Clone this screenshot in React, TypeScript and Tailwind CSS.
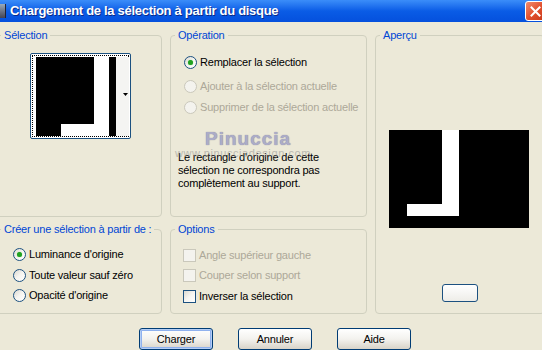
import React from "react";

const font = { fontFamily: '"Liberation Sans", Arial, sans-serif' };

function Radio({ checked, disabled }: { checked?: boolean; disabled?: boolean }) {
    return (
        <span
            className={`w-[13px] h-[13px] shrink-0 rounded-full border flex items-center justify-center ${disabled
                ? "border-[#CAC8BB] bg-[#F4F3EE]"
                : "border-[#1C5180] bg-linear-to-br from-[#DCD9D0] via-[#F6F5F1] to-white"
                }`}
        >
            {checked && <span className="w-[5px] h-[5px] rounded-full bg-[#21A121] shadow-[0_0_1px_#5FD05F]" />}
        </span>
    );
}

function Check({ disabled }: { disabled?: boolean }) {
    return (
        <span
            className={`w-[13px] h-[13px] shrink-0 border ${disabled
                ? "border-[#CAC8BB] bg-[#F4F3EE]"
                : "border-[#1C5180] bg-linear-to-br from-[#DCD9D0] via-[#F6F5F1] to-white"
                }`}
        />
    );
}

function Option({
    kind,
    label,
    checked,
    disabled,
    className,
}: {
    kind: "radio" | "check";
    label: string;
    checked?: boolean;
    disabled?: boolean;
    className: string;
}) {
    return (
        <div className={`flex items-center h-[13px] ${className}`}>
            {kind === "radio" ? <Radio checked={checked} disabled={disabled} /> : <Check disabled={disabled} />}
            <span className={`ml-[3px] whitespace-nowrap ${disabled ? "text-[#ACA899]" : "text-black"}`}>{label}</span>
        </div>
    );
}

function Group({ title, className, children }: { title: string; className: string; children?: React.ReactNode }) {
    return (
        <fieldset className={`relative border border-[#D0D0BF] rounded-[4px] shrink-0 ${className}`}>
            <legend className="ml-[4px] px-[3px] leading-[13px] whitespace-nowrap text-[#0046D5]">{title}</legend>
            {children}
        </fieldset>
    );
}

function XpButton({ label, isDefault }: { label: string; isDefault?: boolean }) {
    return (
        <button
            className={`w-[74px] h-[22px] rounded-[3px] border border-[#003C74] bg-linear-to-b from-white via-[#F3F2EE] to-[#D8D3C8] text-black leading-none ${isDefault ? "shadow-[inset_0_0_0_1px_#B5CEF5,inset_0_0_0_2px_#8FB1EE]" : ""
                }`}
        >
            {label}
        </button>
    );
}

export default function App() {
    return (
        <div className="w-[542px] h-[350px] overflow-hidden bg-[#ECE9D8] text-[11px] tracking-[-0.2px] flex flex-col" style={font}>
            {/* Title bar */}
            <div className="h-[22px] shrink-0 flex items-center bg-linear-to-b from-[#3B8DF9] via-[#0A5CE6] to-[#0550DD]">
                <span className="w-[6px] h-[14px] bg-linear-to-b from-[#9AB] to-[#445] border-r border-[#223]" />
                <span className="ml-[4px] text-white font-bold text-[13px] tracking-[-0.3px] [text-shadow:1px_1px_0_#0A2A88]">
                    Chargement de la sélection à partir du disque
                </span>
                <span className="ml-auto mr-[-4px] w-[21px] h-[20px] rounded-[3px] border border-white bg-linear-to-br from-[#F08A6E] via-[#E2502E] to-[#C8381A] flex items-center justify-center">
                    <svg width="11" height="11" viewBox="0 0 11 11">
                        <path d="M1.5 1.5 L9.5 9.5 M9.5 1.5 L1.5 9.5" stroke="white" strokeWidth="2" strokeLinecap="square" />
                    </svg>
                </span>
            </div>

            {/* Top row */}
            <div className="flex gap-[8px] ml-[-4px] mt-[7px]">
                <Group title="Sélection" className="w-[166px] h-[188px]">
                    <div className="ml-[33px] mt-[11px] w-[101px] h-[86px] rounded-[2px] border border-[#1C5180] bg-white p-[1px]">
                        <div className="w-full h-full border border-dotted border-black">
                            <svg width="97" height="82" viewBox="0 0 97 82">
                                <rect x="3" y="1" width="73" height="79" fill="black" />
                                <rect x="61" y="1" width="15" height="79" fill="white" />
                                <rect x="28" y="68" width="48" height="12" fill="white" />
                                <rect x="76" y="1" width="7" height="79" fill="black" />
                                <rect x="83" y="1" width="13" height="79" fill="#F4F4F2" />
                                <path d="M90 37 L95 37 L92.5 40 Z" fill="black" />
                            </svg>
                        </div>
                    </div>
                </Group>

                <Group title="Opération" className="w-[197px] h-[188px]">
                    <Option kind="radio" label="Remplacer la sélection" checked className="ml-[13px] mt-[14px]" />
                    <Option kind="radio" label="Ajouter à la sélection actuelle" disabled className="ml-[13px] mt-[11px]" />
                    <Option kind="radio" label="Supprimer de la sélection actuelle" disabled className="ml-[13px] mt-[8px]" />
                    <p className="ml-[7px] mt-[37px] leading-[13px] text-black">
                        Le rectangle d'origine de cette
                        <br />
                        sélection ne correspondra pas
                        <br />
                        complètement au support.
                    </p>
                    {/* watermark */}
                    <div className="absolute left-[34px] top-[87px] text-[19px] leading-none font-semibold tracking-[1px] text-[#A6A6C6] opacity-90 [text-shadow:0_0_1px_#6E6E90]">
                        Pinuccia
                    </div>
                    <div className="absolute left-[4px] top-[105px] leading-[13px] text-[11px] tracking-[0.6px] text-[#8A8A8A] opacity-50 whitespace-nowrap">
                        www.pinucciadesign.com
                    </div>
                </Group>

                <Group title="Aperçu" className="w-[170px] h-[285px]">
                    <div className="ml-[13px] mt-[88px]">
                        <svg width="140" height="98" viewBox="0 0 140 98" className="block">
                            <rect width="140" height="98" fill="black" />
                            <rect x="53" y="0" width="17" height="86" fill="white" />
                            <rect x="18" y="74" width="52" height="12" fill="white" />
                        </svg>
                    </div>
                    <div className="ml-[66px] mt-[56px] w-[36px] h-[18px] rounded-[3px] border border-[#1C5180] bg-linear-to-b from-white to-[#EEEDE8]" />
                </Group>
            </div>

            {/* Bottom row */}
            <div className="flex gap-[8px] ml-[-4px] mt-[-91px]">
                <Group title="Créer une sélection à partir de :" className="w-[166px] h-[91px]">
                    <Option kind="radio" label="Luminance d'origine" checked className="ml-[16px] mt-[12px]" />
                    <Option kind="radio" label="Toute valeur sauf zéro" className="ml-[16px] mt-[8px]" />
                    <Option kind="radio" label="Opacité d'origine" className="ml-[16px] mt-[7px]" />
                </Group>
                <Group title="Options" className="w-[197px] h-[91px]">
                    <Option kind="check" label="Angle supérieur gauche" disabled className="ml-[12px] mt-[13px]" />
                    <Option kind="check" label="Couper selon support" disabled className="ml-[12px] mt-[7px]" />
                    <Option kind="check" label="Inverser la sélection" className="ml-[12px] mt-[8px]" />
                </Group>
            </div>

            {/* Buttons */}
            <div className="flex gap-[25px] ml-[139px] mt-[14px]">
                <XpButton label="Charger" isDefault />
                <XpButton label="Annuler" />
                <XpButton label="Aide" />
            </div>
        </div>
    );
}
